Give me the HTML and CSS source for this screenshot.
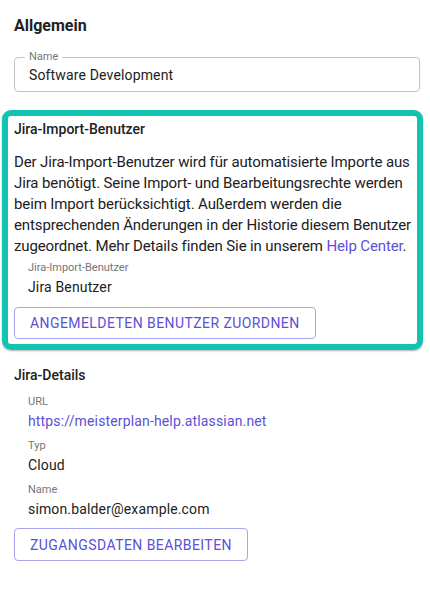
FILE: index.html
```
<!DOCTYPE html>
<html lang="de">
<head>
  <meta charset="UTF-8">
  <meta name="viewport" content="width=device-width, initial-scale=1.0">
  <title>Jira-Einstellungen</title>
  <link rel="stylesheet" href="styles.css">
</head>
<body>
  <div class="settings">
    <h2 class="section-title">Allgemein</h2>
    <div class="text-field">
      <span class="text-field-label">Name</span>
      <span class="text-field-value">Software Development</span>
    </div>

    <!-- highlighted section -->
    <div class="highlight-box">
      <h3 class="sub-title">Jira-Import-Benutzer</h3>
      <p class="description">Der Jira-Import-Benutzer wird für automatisierte Importe aus Jira benötigt. Seine Import- und Bearbeitungsrechte werden beim Import berücksichtigt. Außerdem werden die entsprechenden Änderungen in der Historie diesem Benutzer zugeordnet. Mehr Details finden Sie in unserem <a href="#" class="link">Help Center</a>.</p>
      <div class="field">
        <div class="field-label">Jira-Import-Benutzer</div>
        <div class="field-value">Jira Benutzer</div>
      </div>
      <button type="button" class="outline-button">Angemeldeten Benutzer zuordnen</button>
    </div>

    <h3 class="sub-title details-title">Jira-Details</h3>
    <div class="field">
      <div class="field-label">URL</div>
      <div class="field-value"><a href="#" class="link">https://meisterplan-help.atlassian.net</a></div>
    </div>
    <div class="field">
      <div class="field-label">Typ</div>
      <div class="field-value">Cloud</div>
    </div>
    <div class="field">
      <div class="field-label">Name</div>
      <div class="field-value">simon.balder@example.com</div>
    </div>
    <button type="button" class="outline-button">Zugangsdaten bearbeiten</button>
  </div>
</body>
</html>
```

FILE: styles.css
```
body {
  margin: 0;
  font-family: Roboto, "Liberation Sans", Arial, sans-serif;
  color: #212121;
  background-color: white;
}

.settings {
  padding: 16px 10px 40px 14px;
}

.section-title {
  margin: 0;
  font-size: 16px;
  font-weight: 700;
  line-height: 20px;
}

.text-field {
  position: relative;
  display: flex;
  align-items: center;
  height: 35px;
  margin-top: 21px;
  padding: 0 14px;
  border: 1px solid #c4c4c4;
  border-radius: 4px;
  box-sizing: border-box;
}

.text-field-label {
  position: absolute;
  top: -8px;
  left: 10px;
  padding: 0 4px;
  background-color: white;
  font-size: 11px;
  line-height: 14px;
  color: #757575;
}

.text-field-value {
  font-size: 14px;
  letter-spacing: 0.15px;
}

.highlight-box {
  margin: 18px -3px 0 -12px;
  padding: 3px 2px 5px 6px;
  border: 6px solid #13c3b2; /* teal highlight */
  border-radius: 9px;
  box-shadow: 0 1px 2px rgba(0, 0, 0, 0.3);
}

.sub-title {
  margin: 0;
  font-size: 14px;
  font-weight: 500;
  line-height: 20px;
}

.description {
  margin: 13px 0 3px;
  font-size: 15px;
  letter-spacing: -0.12px;
  line-height: 21px;
}

.link {
  color: #5b50d6;
  text-decoration: none;
}

.field {
  padding-left: 14px;
  margin-bottom: 6px;
}

.field-label {
  font-size: 11px;
  line-height: 16px;
  color: #757575;
}

.field-value {
  font-size: 14px;
  letter-spacing: 0.15px;
  line-height: 22px;
}

.outline-button {
  height: 32px;
  margin-top: 3px;
  padding: 0 15px;
  border: 1px solid #a9a4ee;
  border-radius: 4px;
  background-color: white;
  font-family: inherit;
  font-size: 14px;
  letter-spacing: 0.43px;
  text-transform: uppercase;
  color: #5b50d6;
  cursor: pointer;
}

.details-title {
  margin-top: 15px;
  margin-bottom: 9px;
}

.settings > .outline-button {
  height: 33px;
  margin-top: 2px;
}
```
